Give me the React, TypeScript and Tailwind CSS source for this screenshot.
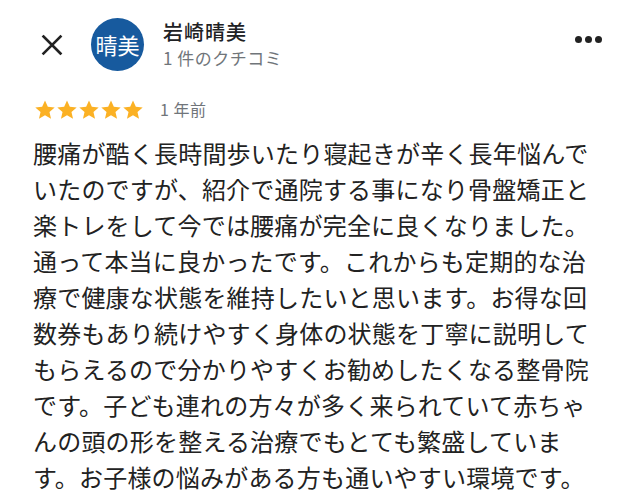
import React from "react";

const Star = () => (
  <svg width="22" height="21" viewBox="0 0 24 23" className="block">
    <path
      fill="#fbb124"
      d="M12 1.6l3.1 6.9 7.5.7-5.7 5 1.7 7.4L12 17.7l-6.6 3.9 1.7-7.4-5.7-5 7.5-.7z"
    />
  </svg>
);

export default function App() {
  const font = { fontFamily: '"Noto Sans CJK JP", "Noto Sans", sans-serif' };
  return (
    <div className="w-[640px] h-[501px] bg-white overflow-hidden text-[#202124]" style={font}>
      <div className="flex items-center h-[70px] pt-[18px] pl-[40px] pr-[38px]">
        <svg width="24" height="24" viewBox="0 0 24 24" className="shrink-0 mt-[2px]">
          <path d="M3.5 3.5L20.5 20.5M20.5 3.5L3.5 20.5" stroke="#222" strokeWidth="2.6" strokeLinecap="square" />
        </svg>
        <div className="ml-[27px] w-[53px] h-[53px] rounded-full bg-[#175a9e] flex items-center justify-center text-white text-[22px] leading-none shrink-0">
          晴美
        </div>
        <div className="ml-[19px] flex flex-col">
          <div className="text-[20px] leading-[26px] font-medium tracking-[1px] text-[#202124]">岩崎晴美</div>
          <div className="text-[17px] leading-[24px] tracking-[0.5px] text-[#70757a] mt-[1px] whitespace-pre">1 件のクチコミ</div>
        </div>
        <div className="ml-auto flex gap-[3px] items-center self-center mt-[-10px]">
          <span className="w-[7px] h-[7px] rounded-full bg-[#222]" />
          <span className="w-[7px] h-[7px] rounded-full bg-[#222]" />
          <span className="w-[7px] h-[7px] rounded-full bg-[#222]" />
        </div>
      </div>
      <div className="flex items-center pl-[34px] mt-[27px] h-[24px]">
        <div className="flex">
          <Star />
          <Star />
          <Star />
          <Star />
          <Star />
        </div>
        <span className="ml-[16px] text-[16px] text-[#70757a] leading-none whitespace-pre tracking-[0.5px]">1 年前</span>
      </div>
      <p className="mt-[14px] ml-[33px] w-[566px] text-[24px] leading-[36px] tracking-[0.2px] text-[#222]">
        腰痛が酷く長時間歩いたり寝起きが辛く長年悩んでいたのですが、紹介で通院する事になり骨盤矯正と楽トレをして今では腰痛が完全に良くなりました。通って本当に良かったです。これからも定期的な治療で健康な状態を維持したいと思います。お得な回数券もあり続けやすく身体の状態を丁寧に説明してもらえるので分かりやすくお勧めしたくなる整骨院です。子ども連れの方々が多く来られていて赤ちゃんの頭の形を整える治療でもとても繁盛しています。お子様の悩みがある方も通いやすい環境です。
      </p>
    </div>
  );
}
